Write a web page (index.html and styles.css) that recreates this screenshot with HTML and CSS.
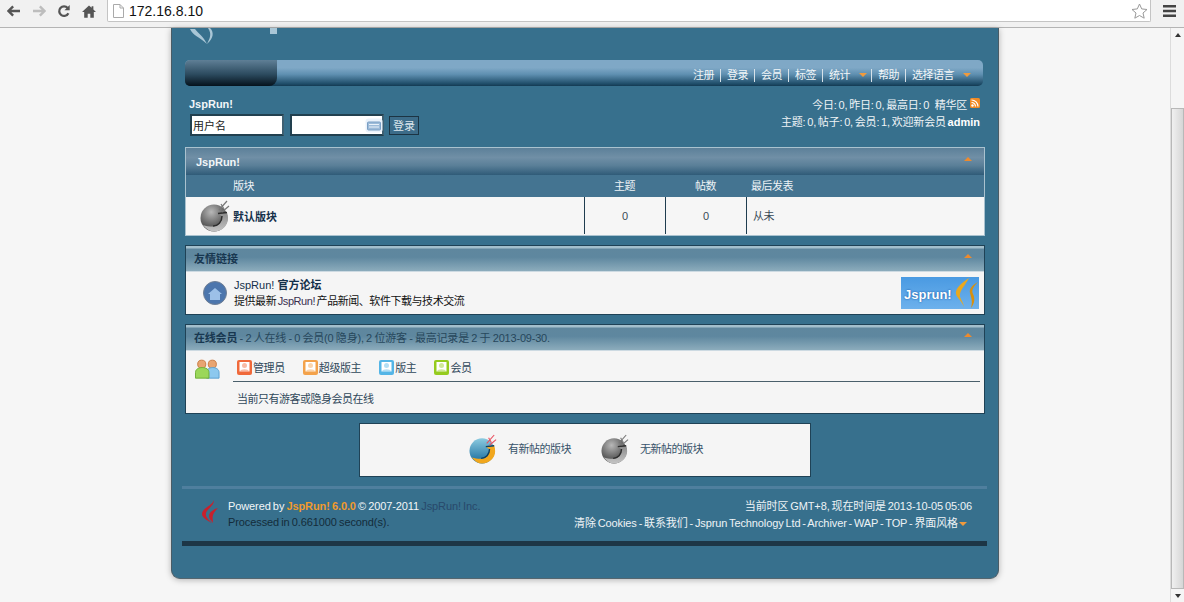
FILE: index.html
```html
<!DOCTYPE html>
<html lang="zh">
<head>
<meta charset="utf-8">
<title>JspRun!</title>
<link rel="stylesheet" href="styles.css">
</head>
<body>
<svg class="defs" width="0" height="0">
  <defs>
    <radialGradient id="gGrey" cx="40%" cy="28%" r="78%"><stop offset="0" stop-color="#b8b8b8"/><stop offset=".55" stop-color="#6c6c6c"/><stop offset="1" stop-color="#333"/></radialGradient>
    <linearGradient id="gCres" x1="0" y1="0" x2="0" y2="1"><stop offset="0" stop-color="#8a8a8a"/><stop offset="1" stop-color="#c4c4c4"/></linearGradient>
    <linearGradient id="gBlue" x1="0" y1="0" x2="0" y2="1"><stop offset="0" stop-color="#8ccbe0"/><stop offset="1" stop-color="#14699b"/></linearGradient>
    <symbol id="ballGrey" viewBox="0 0 30 32">
      <circle cx="14" cy="18" r="13.500" fill="url(#gGrey)"/>
      <path d="M3 25c3 4 7 6.500 11 6.500 8 0 14-6 14-13 0-2-.3-4-1-6l-8 1.500 3 2.500c0 6-4 10-9 10-4 0-7-.5-10-1.500z" fill="url(#gCres)"/>
      <path d="M18 13.500l9-1M22 16c0 6-4 10-9 10" fill="none" stroke="#2e2e2e" stroke-width="1.500"/>
      <path d="M19 10l8-9M22 12l7-6M24 9l-3-5" fill="none" stroke="#777" stroke-width="1.200"/>
    </symbol>
    <symbol id="ballColor" viewBox="0 0 30 32">
      <circle cx="14" cy="18" r="13.500" fill="url(#gBlue)"/>
      <path d="M3 25c3 4 7 6.500 11 6.500 8 0 14-6 14-13 0-2-.3-4-1-6l-8 1.500 3 2.500c0 6-4 10-9 10-4 0-7-.5-10-1.500z" fill="#f1a71d"/>
      <path d="M18 13.500l9-1M22 16c0 6-4 10-9 10" fill="none" stroke="#103f5e" stroke-width="1.500"/>
      <path d="M19 10l8-9M22 12l7-6M24 9l-3-5" fill="none" stroke="#e8505f" stroke-width="1.200"/>
    </symbol>
    <symbol id="person" viewBox="0 0 15 15">
      <rect width="15" height="15" rx="2" fill="currentColor"/>
      <rect x="2.500" y="2" width="10" height="9.500" fill="#fff"/>
      <circle cx="7.500" cy="5.500" r="2.500" fill="currentColor" opacity=".45"/>
      <path d="M3 11.500c.5-3 8.500-3 9 0z" fill="currentColor" opacity=".45"/>
    </symbol>
  </defs>
</svg>

<header class="toolbar">
  <svg class="tool" width="14" height="12" viewBox="0 0 16 14"><path d="M7 1.500 1.500 7 7 12.500M2 7h13" fill="none" stroke="#555" stroke-width="2.800"/></svg>
  <svg class="tool" width="14" height="12" viewBox="0 0 16 14"><path d="M9 1.500 14.500 7 9 12.500M14 7H1" fill="none" stroke="#bdbdbd" stroke-width="2.800"/></svg>
  <svg class="tool" width="14" height="14" viewBox="0 0 16 16"><path d="M13 10.500A5.500 5.500 0 1 1 12.200 4.500" fill="none" stroke="#555" stroke-width="2.600"/><path d="M14.500 1v6h-6z" fill="#555"/></svg>
  <svg class="tool" width="14" height="13" viewBox="0 0 16 14"><path d="M8 0 0 7.500h2.500V14h4V9.500h3V14h4V7.500H16L13 4.600V1h-2v1.700z" fill="#555"/></svg>
  <div class="address">
    <svg width="11" height="14" viewBox="0 0 11 14"><path d="M.5.500h6.500l3.500 3.500v9.500H.5zM7 .5V4h3.500" fill="#fff" stroke="#aaa"/></svg>
    <span class="url">172.16.8.10</span>
    <svg class="star" width="17" height="16" viewBox="0 0 17 16"><path d="M8.500 1l2.200 4.900 5.300.6-4 3.500 1.200 5.200-4.700-2.700-4.700 2.700L5 10 1 6.500l5.300-.6z" fill="#fff" stroke="#999"/></svg>
  </div>
  <svg class="menu" width="13" height="12" viewBox="0 0 13 12"><path d="M0 0h13v2.500H0zM0 4.700h13v2.500H0zM0 9.400h13v2.500H0z" fill="#444"/></svg>
</header>

<div class="viewport">
  <main class="stage">
    <div class="sheet">
      <div class="logo">
        <svg width="100" height="17" viewBox="0 0 100 17"><path d="M0 1C3 8 10 9 17 16 13 8 8 5 5 1zM20 0c4 4 4 10-3 16 3-6 5-10 1-16z" fill="#a9c6d6"/><rect x="80" width="7" height="6" fill="#a9c6d6"/></svg>
      </div>

      <nav class="navbar">
        <div class="nav-dark"></div>
        <ul class="nav-list">
          <li>注册</li><li>登录</li><li>会员</li><li>标签</li>
          <li>统计<i class="caret nav-caret"></i></li>
          <li>帮助</li>
          <li>选择语言<i class="caret nav-caret"></i></li>
        </ul>
      </nav>

      <section class="info">
        <div class="login">
          <strong class="site">JspRun!</strong>
          <form class="login-form">
            <input class="field" value="用户名">
            <span class="pw-wrap">
              <input class="field" type="text" value="">
              <svg class="kbd" width="18" height="15" viewBox="0 0 18 15"><rect x=".5" y=".5" width="17" height="14" rx="3" fill="#eaf2fb"/><rect x="2.500" y="4" width="13" height="8" rx="1" fill="#9dbbd9" stroke="#7a9fc4"/><path d="M4 6.500h10M4 9h10" stroke="#e9f1f9"/></svg>
            </span>
            <button class="btn" type="button">登录</button>
          </form>
        </div>
        <div class="stats">
          <p>今日: 0, 昨日: 0, 最高日: 0 &nbsp; 精华区 <svg class="rss" width="10" height="10" viewBox="0 0 10 10"><rect width="10" height="10" rx="1.500" fill="#f08a24"/><circle cx="2.500" cy="7.500" r="1.200" fill="#fff"/><path d="M1.500 4.500a4 4 0 0 1 4 4M1.500 2a6.500 6.500 0 0 1 6.500 6.500" fill="none" stroke="#fff" stroke-width="1.200"/></svg></p>
          <p>主题: 0, 帖子: 0, 会员: 1, 欢迎新会员 <b>admin</b></p>
        </div>
      </section>

      <section class="box box-light">
        <div class="title title-a"><strong class="white">JspRun!</strong><i class="caret up"></i></div>
        <div class="grid grid-head">
          <div class="c-name">版块</div><div class="c-num">主题</div><div class="c-num">帖数</div><div class="c-last">最后发表</div>
        </div>
        <div class="grid grid-row">
          <div class="c-name forum">
            <svg class="ball" width="30" height="32"><use href="#ballGrey"/></svg>
            <b>默认版块</b>
          </div>
          <div class="c-num cell">0</div>
          <div class="c-num cell">0</div>
          <div class="c-last cell">从未</div>
        </div>
      </section>

      <section class="box">
        <div class="title title-b"><strong>友情链接</strong><i class="caret up"></i></div>
        <div class="link-row">
          <svg class="globe" width="24" height="24" viewBox="0 0 24 24"><circle cx="12" cy="12" r="11.500" fill="#4c76ad" stroke="#6f7f95"/><path d="M5 13l7-6 7 6h-2v6H7v-6z" fill="#9cc0e8"/></svg>
          <div class="link-text">
            <p class="link-name"><b class="navy"><span class="latin">JspRun!</span> 官方论坛</b></p>
            <p>提供最新 <span class="maroon">JspRun!</span> 产品新闻、软件下载与技术交流</p>
          </div>
          <div class="banner">
            <span class="banner-text">Jsprun!</span>
            <svg class="banner-mark" width="26" height="32" viewBox="0 0 26 32"><path d="M16 1C8 6 2 12 3 17c1 4 5 6 8 13-1-6-5-9-4-13 1-5 6-10 9-16z" fill="#eaa81f"/><path d="M25 5c-6 3-9 7-8 11 1 4 3 8 1 15 4-5 4-10 2-14-2-4 1-8 5-12z" fill="#d8900f"/></svg>
          </div>
        </div>
      </section>

      <section class="box">
        <div class="title title-b"><span class="online"><strong>在线会员</strong> - 2 人在线 - 0 会员(0 隐身), 2 位游客 - 最高记录是 2 于 2013-09-30.</span><i class="caret up"></i></div>
        <div class="online-row">
          <svg class="users" width="25" height="20" viewBox="0 0 26 20"><circle cx="7" cy="5" r="4.200" fill="#e8a572" stroke="#c9793f"/><circle cx="18" cy="5" r="4.200" fill="#e8a572" stroke="#c9793f"/><path d="M12 19.500h13v-6c0-3-3-5-6.500-5S12 10.500 12 13.500z" fill="#8cc8ee" stroke="#5aa0d0"/><path d="M.5 19.500h14v-6c0-3-3-5-7-5s-7 2-7 5z" fill="#9bd75a" stroke="#6fae36"/></svg>
          <div class="online-main">
            <ul class="legend-roles">
              <li><svg class="role r1" width="15" height="15"><use href="#person"/></svg>管理员</li>
              <li><svg class="role r2" width="15" height="15"><use href="#person"/></svg>超级版主</li>
              <li><svg class="role r3" width="15" height="15"><use href="#person"/></svg>版主</li>
              <li><svg class="role r4" width="15" height="15"><use href="#person"/></svg>会员</li>
            </ul>
            <p class="online-note">当前只有游客或隐身会员在线</p>
          </div>
        </div>
      </section>

      <section class="legend">
        <div class="legend-item"><svg width="28" height="32" viewBox="0 0 30 32"><use href="#ballColor"/></svg><span>有新帖的版块</span></div>
        <div class="legend-item"><svg width="28" height="32" viewBox="0 0 30 32"><use href="#ballGrey"/></svg><span>无新帖的版块</span></div>
      </section>

      <footer class="footer">
        <div class="foot-top"></div>
        <div class="foot-main">
          <svg class="flame" width="16" height="24" viewBox="0 0 16 24"><path d="M12 0C10 6 0 8 0 14c0 4 6 7 10 9C7 20 3 17 4 13 5 9 12 6 12 0z" fill="#c8202c"/><path d="M16 8C12 9 7 12 7 16c0 3 3 5 4 7 0-3-1-5 0-8 1-3 3-5 5-7z" fill="#c8202c"/></svg>
          <div class="foot-left">
            <p class="white-b">Powered by <b class="orange">JspRun! 6.0.0</b> © 2007-2011 <span class="dimlink">JspRun! Inc.</span></p>
            <p class="dark-text">Processed in 0.661000 second(s).</p>
          </div>
          <div class="foot-right">
            <p>当前时区 GMT+8, 现在时间是 2013-10-05 05:06</p>
            <p class="foot-links">清除 Cookies - 联系我们 - Jsprun Technology Ltd - Archiver - WAP - TOP - 界面风格<i class="caret foot-caret"></i></p>
          </div>
        </div>
        <div class="foot-bar"></div>
      </footer>
    </div>
  </main>
  <aside class="scrollbar">
    <div class="sb-btn"><i class="sb-up"></i></div>
    <div class="sb-track"><div class="sb-thumb"></div></div>
    <div class="sb-btn"><i class="sb-down"></i></div>
  </aside>
</div>
</body>
</html>
```

FILE: styles.css
```css
* { box-sizing: border-box; }
html, body { margin: 0; height: 100%; overflow: hidden; }
body {
  display: flex;
  flex-direction: column;
  background: #f6f6f6;
  font: 12px/16px "Liberation Sans", "Noto Sans CJK SC", sans-serif;
  color: #1c3a4c;
}
p, ul { margin: 0; padding: 0; list-style: none; }
i { font-style: normal; }
.defs { position: absolute; }

.toolbar {
  flex: 0 0 27px;
  display: flex;
  align-items: center;
  padding: 0 8px 5px 7px;
  background: #f1f1f1;
  border-bottom: 1px solid #b4b4b4;
}
.tool { margin-right: 11px; flex: none; }
.address {
  flex: 1;
  height: 22px;
  align-self: flex-start;
  display: flex;
  align-items: center;
  padding: 0 2px 0 5px;
  background: #fff;
  border: 1px solid #c4c4c4;
  border-top: 0;
  border-radius: 0 0 2px 2px;
}
.url { margin-left: 5px; font-size: 14px; color: #111; flex: 1; }
.menu { margin-left: 12px; flex: none; }

.viewport { flex: 1; display: flex; min-height: 0; }
.stage { flex: 1; display: flex; justify-content: center; min-width: 0; }
.sheet {
  width: 828px;
  height: 551px;
  padding: 0 13px;
  background: #37708d;
  border-radius: 0 0 9px 9px;
  border-left: 1px solid #4a5c66;
  border-right: 1px solid #4a5c66;
  border-bottom: 1px solid #55666f;
  box-shadow: 0 1px 6px rgba(0, 0, 0, .28);
}
.scrollbar {
  flex: 0 0 14px;
  display: flex;
  flex-direction: column;
  border-left: 1px solid #dcdcdc;
  background: #f5f5f5;
}
.sb-btn { flex: 0 0 14px; display: flex; align-items: center; justify-content: center; }
.sb-up { width: 0; height: 0; border: 3.5px solid transparent; border-top: 0; border-bottom: 4px solid #333; }
.sb-down { width: 0; height: 0; border: 3.5px solid transparent; border-bottom: 0; border-top: 4px solid #333; }
.sb-track { flex: 1; padding-top: 66px; }
.sb-thumb { height: 481px; background: linear-gradient(90deg, #f0f0f0, #d6d6d6); border: 1px solid #b8b8b8; }

.logo { height: 32px; padding-left: 5px; overflow: hidden; }
.logo svg { display: block; }

.navbar {
  height: 26px;
  margin-right: 2px;
  display: flex;
  justify-content: space-between;
  border-radius: 5px;
  background: linear-gradient(#7fa8c6 0 30%, #5f90b1 55%, #1e4c68 92%, #143a52);
  overflow: hidden;
}
.nav-dark {
  width: 92px;
  border-radius: 0 0 8px 0;
  background: linear-gradient(#5f7f96, #2c4b5f 55%, #05121c);
}
.nav-list {
  display: flex;
  align-items: center;
  padding: 4px 6px 0 0;
  color: #f2f6f8;
  font-size: 11px;
  letter-spacing: -.5px;
}
.nav-list li { display: flex; align-items: center; padding: 0 6px; height: 16px; }
.nav-list li + li { border-left: 1px solid #d7e2e9; height: 13px; }
.caret { display: inline-block; width: 0; height: 0; border: 4px solid transparent; border-bottom: 0; border-top-color: #f09a3c; }
.nav-caret { margin-left: 9px; margin-right: -2px; }
.nav-list li:last-child .nav-caret { margin-left: 9px; margin-right: 0; }

.info {
  height: 61px;
  padding: 11px 5px 0 4px;
  display: flex;
  justify-content: space-between;
  color: #eef3f6;
}
.site { display: block; color: #f2f6f8; font-size: 11px; line-height: 15px; }
.login-form { display: flex; align-items: center; gap: 6px; margin-left: 1px; margin-top: 2px; }
.field {
  width: 94px;
  height: 22px;
  padding: 0 1px;
  background: #fff;
  border: 2px solid #22404f;
  border-right-color: #3f6072;
  font: 11px "Liberation Sans", "Noto Sans CJK SC", sans-serif;
  color: #222;
}
.pw-wrap { position: relative; display: flex; }
.kbd { position: absolute; right: 1px; top: 4px; }
.btn {
  width: 30px;
  height: 19px;
  margin-left: -1px;
  padding: 0;
  background: #3c6c89;
  border: 1px solid #1c3443;
  color: #dde7ed;
  font: 11px "Liberation Sans", "Noto Sans CJK SC", sans-serif;
}
.stats { text-align: right; font-size: 11px; line-height: 17px; letter-spacing: -.2px; word-spacing: -1px; }
.stats b { color: #fff; letter-spacing: 0; }
.rss { vertical-align: 1px; margin-left: 1px; }

.box { background: #f5f5f5; border: 1px solid #1f4256; margin-bottom: 9px; }
.box-light { border-color: #a9c2cf; }
.title {
  height: 27px;
  display: flex;
  align-items: center;
  justify-content: space-between;
  padding: 0 12px 0 8px;
  font-size: 11px;
}
.title-a { height: 27px; padding-left: 10px; background: linear-gradient(#5c8099, #708fa6 35%, #5a7f98 65%, #2f5b78); }
.title-b { height: 26px; background: linear-gradient(#a3bfcc 0 2px, #5f879e 12%, #5e879f 45%, #8cacbc); border-bottom: 1px solid #cddae2; }
.title strong { color: #183750; font-size: 11px; }
.title .white { color: #f2f6f8; font-size: 11px; }
.online { color: #27475c; font-size: 11px; white-space: nowrap; letter-spacing: -.2px; word-spacing: -.5px; }
.up { border: 4px solid transparent; border-top: 0; border-bottom-color: #ee8a2c; margin-top: -5px; }

.grid { display: grid; grid-template-columns: 398px 81px 81px 1fr; font-size: 11px; }
.grid-head { height: 22px; align-items: center; background: #447491; color: #eef3f6; letter-spacing: -.5px; }
.grid-row { height: 38px; background: #f6f6f6; }
.c-name { padding-left: 47px; }
.c-num { text-align: center; }
.c-last { padding-left: 5px; }
.forum { position: relative; display: flex; align-items: center; padding-top: 1px; color: #14304a; }
.ball { position: absolute; left: 14px; top: 3px; }
.cell {
  height: 37px;
  display: flex;
  align-items: center;
  border-left: 1px solid #1f3d50;
  color: #3a4a56;
  padding-top: 1px;
}
.c-num.cell { justify-content: center; }
.c-last.cell { padding-left: 6px; letter-spacing: -.5px; }

.link-row { display: flex; align-items: center; height: 42px; padding: 0 5px 0 17px; background: #f5f5f5; }
.globe { flex: none; margin-right: 7px; }
.link-text { flex: 1; line-height: 16px; color: #111; font-size: 11px; letter-spacing: -.45px; word-spacing: -1px; }
.link-name { letter-spacing: 0; word-spacing: 0; }
.navy { color: #14304a; font-size: 11px; }
.latin { font-weight: 400; }
.maroon { color: #3a2f4f; }
.banner {
  position: relative;
  width: 78px;
  height: 32px;
  overflow: hidden;
  background: linear-gradient(#4a9ae2, #6db1ec);
}
.banner-text { position: absolute; left: 3px; top: 8px; color: #fff; font: 700 13px/20px "Liberation Sans", sans-serif; text-shadow: 0 0 2px #0a4a9a; }
.banner-mark { position: absolute; right: 0; top: 0; }

.online-row { display: flex; height: 62px; padding: 0 4px 0 9px; background: #f5f5f5; }
.users { flex: none; margin: 8px 13px 0 0; }
.online-main { flex: 1; }
.legend-roles {
  height: 31px;
  display: flex;
  gap: 18px;
  padding: 8px 0 0 4px;
  border-bottom: 1px solid #4a5f6b;
  color: #30485a;
  font-size: 11px;
  letter-spacing: -.4px;
}
.legend-roles li { display: flex; align-items: center; height: 17px; white-space: nowrap; }
.role { margin-right: 1px; }
.r1 { color: #f0693a; }
.r2 { color: #f3a24b; }
.r3 { color: #54b5e6; }
.r4 { color: #95cb1e; }
.online-note { margin: 9px 0 0 4px; color: #30485a; font-size: 11px; letter-spacing: -.5px; }

.legend {
  width: 452px;
  height: 54px;
  margin: 0 auto;
  display: flex;
  justify-content: center;
  align-items: center;
  gap: 30px;
  background: #f5f5f5;
  border: 1px solid #1f4256;
  padding-left: 2px;
  padding-bottom: 2px;
  color: #37536a;
  font-size: 11px;
  letter-spacing: -.5px;
}
.legend-item { display: flex; align-items: center; gap: 11px; }

.footer { margin: 9px -2px 0 -3px; }
.foot-top { height: 3px; background: #4f7f9e; }
.foot-main { height: 52px; display: flex; padding: 9px 3px 0 20px; align-items: flex-start; }
.flame { flex: none; margin: 2px 0 0 0; }
.foot-left { flex: 1; margin-left: 10px; color: #f2f6f8; line-height: 16px; font-size: 11px; letter-spacing: -.1px; word-spacing: -.8px; }
.white-b { color: #f2f6f8; }
.orange { color: #f09a2c; }
.dimlink { color: #28496b; }
.dark-text { color: #142c3a; }
.foot-right { text-align: right; color: #eef3f6; line-height: 17px; font-size: 11px; padding: 0 12px 0 0; letter-spacing: -.1px; word-spacing: -1.1px; }
.foot-links { padding-right: 5px; }
.foot-caret { margin-left: 1px; vertical-align: 1px; }
.foot-bar { height: 5px; background: #1d3646; }
```
